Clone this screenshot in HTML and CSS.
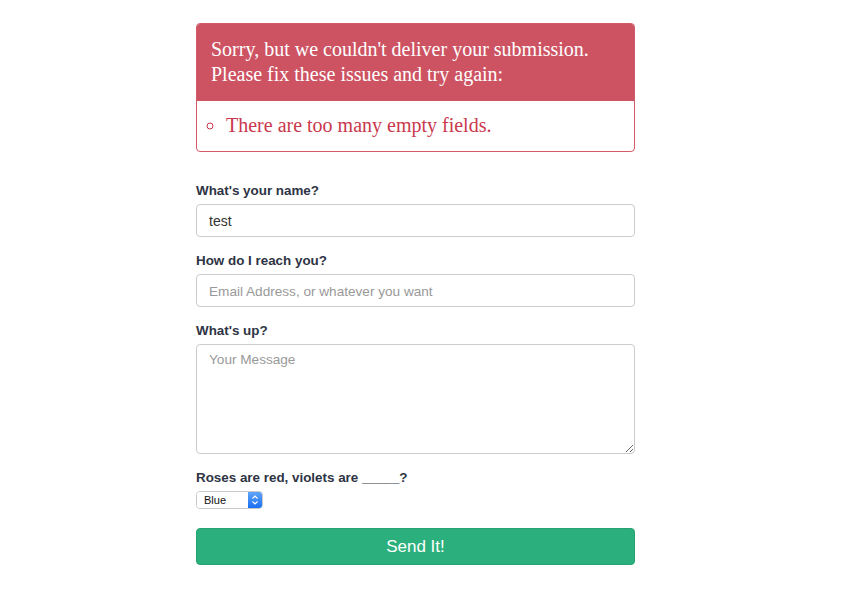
FILE: index.html
```html
<!DOCTYPE html>
<html>
    <head>
        <meta charset="utf-8">
        <title>Contact</title>
        <link rel="stylesheet" href="styles.css">
    </head>
    <body>
        <div id="container">
            <div class="errors">
                <div class="errors-head">Sorry, but we couldn't deliver your submission. Please fix these issues and try again:</div>
                <ul class="errors-list">
                    <li>There are too many empty fields.</li>
                </ul>
            </div>

            <form id="contact">
                <div class="field">
                    <label for="name">What's your name?</label>
                    <input class="text" type="text" id="name" name="name" value="test">
                </div>
                <div class="field">
                    <label for="email">How do I reach you?</label>
                    <input class="text" type="text" id="email" name="email" placeholder="Email Address, or whatever you want">
                </div>
                <div class="field">
                    <label for="message">What's up?</label>
                    <textarea class="text" id="message" name="message" placeholder="Your Message"></textarea>
                </div>
                <div class="field">
                    <label for="captcha">Roses are red, violets are _____?</label>
                    <div class="select">
                        <select id="captcha" name="captcha">
                            <option>Blue</option>
                            <option>Red</option>
                            <option>Green</option>
                        </select>
                        <span class="arrows">
                            <svg width="8" height="12" viewBox="0 0 8 12"><path d="M1.5 4.5 L4 2 L6.5 4.5 M1.5 7.5 L4 10 L6.5 7.5" fill="none" stroke="#fff" stroke-width="1.2"/></svg>
                        </span>
                    </div>
                </div>
                <button type="submit" id="send">Send It!</button>
            </form>
        </div>
    </body>
</html>
```

FILE: styles.css
```css
body { margin: 0; background: #fff; font-family: "Liberation Sans", Arial, Helvetica, sans-serif; }

#container {
    width: 439px;
    margin: 23px 0 0 196px;
}

/* error box */
.errors {
    border: 1px solid #d45a6a;
    border-radius: 4px;
    overflow: hidden;
}
.errors-head {
    background-color: #cd5363;
    color: #fff;
    font-family: "Liberation Serif", "Times New Roman", serif;
    font-size: 20px;
    line-height: 25px;
    padding: 13px 14px 14px 14px;
}
.errors-list {
    margin: 0;
    padding: 12px 0 13px 29px;
    list-style: circle;
    color: #c9384c;
    font-family: "Liberation Serif", "Times New Roman", serif;
    font-size: 20px;
    line-height: 25px;
}

/* form */
#contact {
    margin-top: 29px;
}
.field {
    margin-bottom: 14px;
}
.field label {
    display: block;
    font-size: 13.4px;
    font-weight: bold;
    line-height: 20px;
    color: #2e3444;
    margin-bottom: 3px;
}
.text {
    display: block;
    box-sizing: border-box;
    width: 100%;
    height: 33px;
    padding: 0 12px;
    border: 1px solid #ccc;
    border-radius: 4px;
    font-family: "Liberation Sans", Arial, sans-serif;
    font-size: 14px;
    color: #333;
}
.text::placeholder {
    color: #999;
    font-size: 13.6px;
}
textarea.text {
    height: 110px;
    padding: 7px 12px;
}

.select {
    display: flex;
    width: 67px;
    height: 18px;
    box-sizing: border-box;
    border: 1px solid #c8c8c8;
    border-radius: 4px;
    overflow: hidden;
    margin-top: 2px;
}
.select select {
    flex: 1;
    min-width: 0;
    appearance: none;
    -webkit-appearance: none;
    border: none;
    background: #fff;
    padding: 0 0 0 7px;
    font-family: "Liberation Sans", Arial, sans-serif;
    font-size: 11px;
    color: #111;
}
.arrows {
    flex: 0 0 14px;
    display: flex;
    align-items: center;
    justify-content: center;
    background: linear-gradient(#5fa5f8, #1a6ff3);
}

#send {
    display: block;
    width: 100%;
    height: 37px;
    margin-top: 19px;
    border: 1px solid #25a271;
    border-radius: 4px;
    background-color: #2baf7c;
    color: #fff;
    font-family: "Liberation Sans", Arial, sans-serif;
    font-size: 17px;
}
```
